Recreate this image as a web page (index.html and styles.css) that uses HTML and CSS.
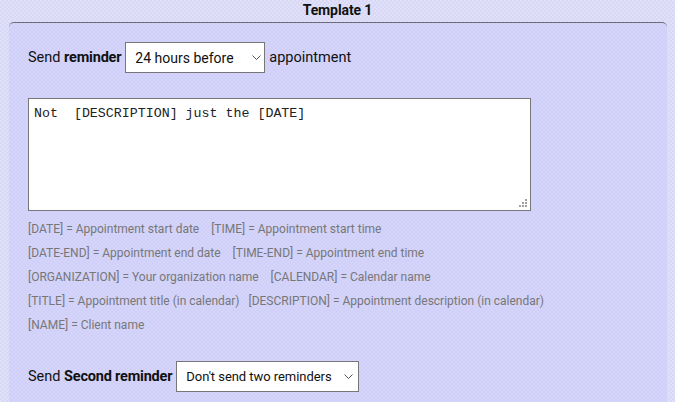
FILE: index.html
```html
<!DOCTYPE html>
<html lang="en">
<head>
    <meta charset="UTF-8">
    <meta name="viewport" content="width=device-width, initial-scale=1.0">
    <title>Reminder Template</title>
    <link rel="stylesheet" href="styles.css">
</head>
<body>
    <div class="title">Template 1</div>
    <div class="panel">
        <div class="row">
            <span>Send <b>reminder</b></span>
            <div class="sel-wrap sel-first">
                <select class="sel">
                    <option>24 hours before</option>
                    <option>48 hours before</option>
                </select>
                <svg class="chevron" width="9" height="5" viewBox="0 0 9 5"><path d="M0.5 0.5 L4.5 4.5 L8.5 0.5" fill="none" stroke="#555" stroke-width="1"/></svg>
            </div>
            <span>appointment</span>
        </div>
        <div class="msg-wrap">
            <textarea class="message">Not  [DESCRIPTION] just the [DATE]</textarea>
            <svg class="grip" width="9" height="9" viewBox="0 0 9 9">
                <rect x="6" y="0" width="2" height="2" fill="#a0a0a0"/>
                <rect x="3" y="3" width="2" height="2" fill="#a0a0a0"/>
                <rect x="6" y="3" width="2" height="2" fill="#a0a0a0"/>
                <rect x="0" y="6" width="2" height="2" fill="#a0a0a0"/>
                <rect x="3" y="6" width="2" height="2" fill="#a0a0a0"/>
                <rect x="6" y="6" width="2" height="2" fill="#a0a0a0"/>
            </svg>
        </div>
        <div class="hints">
            <div>[DATE] = Appointment start date &nbsp;&nbsp; [TIME] = Appointment start time</div>
            <div>[DATE-END] = Appointment end date &nbsp;&nbsp; [TIME-END] = Appointment end time</div>
            <div>[ORGANIZATION] = Your organization name &nbsp;&nbsp; [CALENDAR] = Calendar name</div>
            <div>[TITLE] = Appointment title (in calendar) &nbsp; [DESCRIPTION] = Appointment description (in calendar)</div>
            <div>[NAME] = Client name</div>
        </div>
        <div class="row second">
            <span>Send <b>Second reminder</b></span>
            <div class="sel-wrap sel-second">
                <select class="sel">
                    <option>Don't send two reminders</option>
                </select>
                <svg class="chevron" width="9" height="5" viewBox="0 0 9 5"><path d="M0.5 0.5 L4.5 4.5 L8.5 0.5" fill="none" stroke="#555" stroke-width="1"/></svg>
            </div>
        </div>
    </div>
</body>
</html>
```
FILE: styles.css
```css
body {
    margin: 0;
    font-family: Roboto, "Liberation Sans", sans-serif;
    color: #111;
    background-color: #dcdcf7;
    background-image: repeating-conic-gradient(#d8d8f4 0 25%, #e0e0fa 0 50%);
    background-size: 4px 4px;
    height: 402px;
    overflow: hidden;
    display: flex;
    flex-direction: column;
}
.title {
    height: 22px;
    line-height: 20px;
    text-align: center;
    font-weight: bold;
    font-size: 14px;
    letter-spacing: -0.1px;
}
.panel {
    flex: 1;
    margin: 0 8px 0 9px;
    border-top: 1px solid #6e6e78;
    border-radius: 5px 5px 0 0;
    background-color: #d2d2fa;
    background-image: repeating-conic-gradient(#cfcff8 0 25%, #d5d5fb 0 50%);
    background-size: 4px 4px;
    padding: 19px 19px 0 19px;
}
.row {
    display: flex;
    align-items: center;
    gap: 4px;
    font-size: 14.5px;
}
.row b {
    letter-spacing: -0.2px;
}
.sel-wrap {
    position: relative;
    height: 31px;
}
.sel {
    appearance: none;
    -webkit-appearance: none;
    width: 100%;
    height: 31px;
    background: #fff;
    border: 1px solid #777;
    border-radius: 0;
    font-family: Roboto, "Liberation Sans", sans-serif;
    font-size: 14px;
    color: #111;
    padding: 0 16px 0 9px;
    margin: 0;
}
.chevron {
    position: absolute;
    right: 4px;
    top: 13px;
}
.sel-first {
    width: 140px;
}
.sel-second {
    width: 183px;
}
.sel-second .sel {
    font-size: 13px;
    letter-spacing: -0.05px;
}
.sel-second .chevron {
    right: 6px;
}
.msg-wrap {
    position: relative;
    width: 503px;
    margin-top: 25px;
}
.message {
    display: block;
    box-sizing: border-box;
    width: 503px;
    height: 113px;
    margin: 0;
    border: 1px solid #777;
    background: #fff;
    font-family: "Liberation Mono", monospace;
    font-size: 13.3px;
    color: #222;
    padding: 7px 5px 6px;
    resize: none;
}
.grip {
    position: absolute;
    right: 3px;
    bottom: 3px;
}
.hints {
    margin-top: 6px;
    font-size: 12px;
    line-height: 24px;
    color: #777;
}
.second {
    margin-top: 24px;
}
```
